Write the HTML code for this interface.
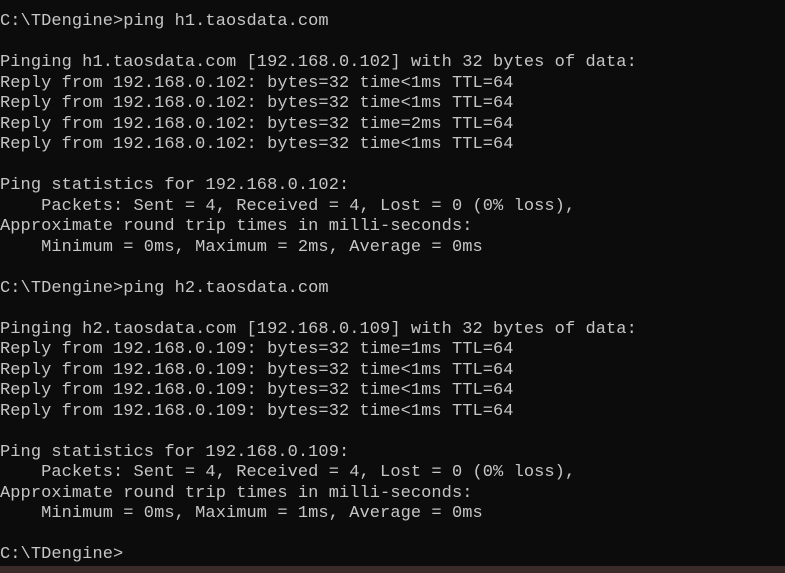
<!DOCTYPE html>
<html><head><meta charset="utf-8"><style>
html,body{margin:0;padding:0;background:#0c0c0c;width:785px;height:573px;overflow:hidden}
pre{margin:0;padding:12px 0 0 0;font-family:"Liberation Mono",monospace;font-size:17px;line-height:20.5px;color:#c6c6c6;letter-spacing:0.07px}
.bar{position:absolute;left:0;top:566px;width:785px;height:7px;background:#3a2a28}
</style></head><body>
<pre>C:\TDengine&gt;ping h1.taosdata.com

Pinging h1.taosdata.com [192.168.0.102] with 32 bytes of data:
Reply from 192.168.0.102: bytes=32 time&lt;1ms TTL=64
Reply from 192.168.0.102: bytes=32 time&lt;1ms TTL=64
Reply from 192.168.0.102: bytes=32 time=2ms TTL=64
Reply from 192.168.0.102: bytes=32 time&lt;1ms TTL=64

Ping statistics for 192.168.0.102:
    Packets: Sent = 4, Received = 4, Lost = 0 (0% loss),
Approximate round trip times in milli-seconds:
    Minimum = 0ms, Maximum = 2ms, Average = 0ms

C:\TDengine&gt;ping h2.taosdata.com

Pinging h2.taosdata.com [192.168.0.109] with 32 bytes of data:
Reply from 192.168.0.109: bytes=32 time=1ms TTL=64
Reply from 192.168.0.109: bytes=32 time&lt;1ms TTL=64
Reply from 192.168.0.109: bytes=32 time&lt;1ms TTL=64
Reply from 192.168.0.109: bytes=32 time&lt;1ms TTL=64

Ping statistics for 192.168.0.109:
    Packets: Sent = 4, Received = 4, Lost = 0 (0% loss),
Approximate round trip times in milli-seconds:
    Minimum = 0ms, Maximum = 1ms, Average = 0ms

C:\TDengine&gt;</pre>
<div class="bar"></div>
</body></html>
